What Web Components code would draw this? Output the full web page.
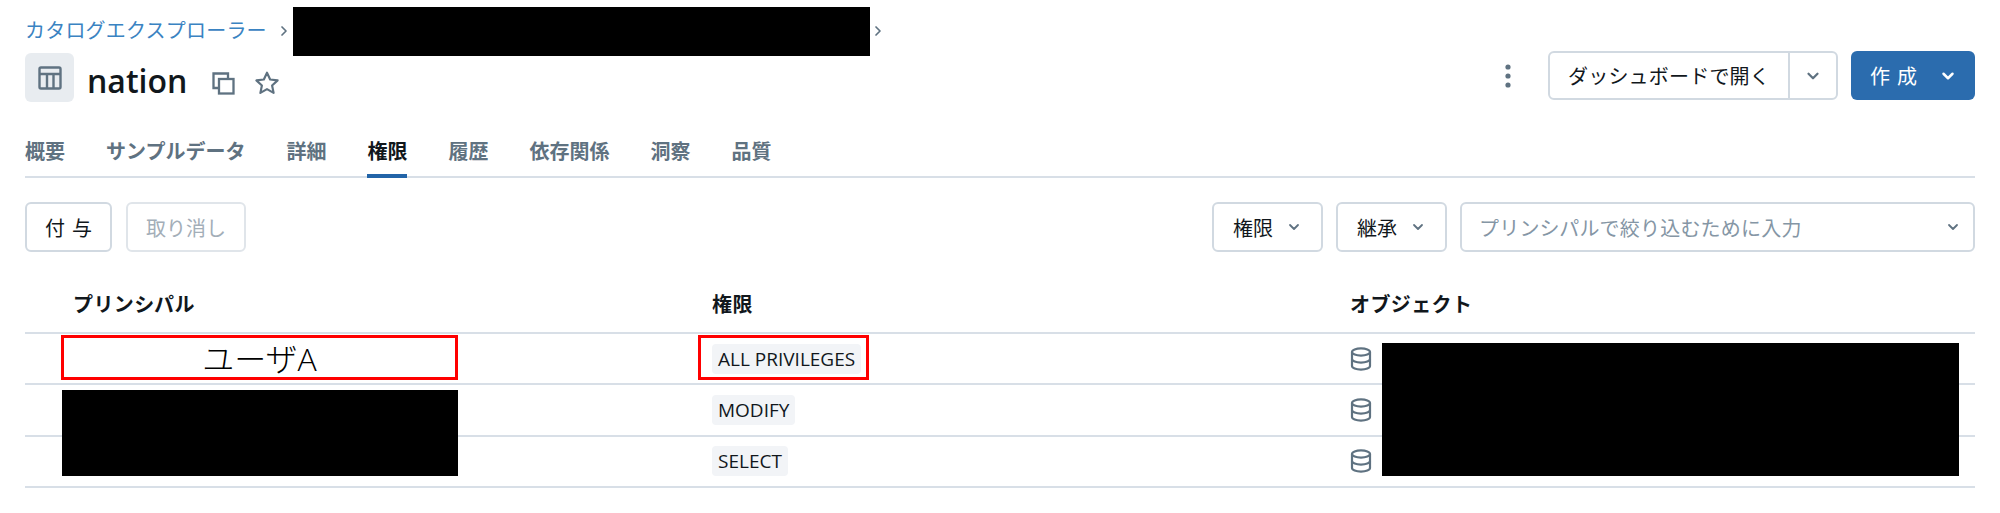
<!DOCTYPE html>
<html lang="ja">
<head>
<meta charset="utf-8">
<title>nation</title>
<style>
  html, body { margin: 0; background: #fff; }
  body {
    position: relative;
    height: 513px;
    overflow: hidden;
    font-family: "Open Sans", "Noto Sans CJK JP", sans-serif;
    font-size: 20px;
    color: #11171c;
  }
</style>
</head>
<body>
<explorer-page>
  <page-header name="nation"></page-header>
  <tab-strip active="権限" tabs="概要,サンプルデータ,詳細,権限,履歴,依存関係,洞察,品質"></tab-strip>
  <filter-bar></filter-bar>
  <grant-table>
    <grant-row privilege="ALL PRIVILEGES" marked>ユーザA</grant-row>
    <grant-row privilege="MODIFY"></grant-row>
    <grant-row privilege="SELECT"></grant-row>
  </grant-table>
</explorer-page>
<redact-box x="293" y="7" w="577" h="49"></redact-box>
<redact-box x="62" y="390" w="396" h="86"></redact-box>
<redact-box x="1382" y="343" w="577" h="133"></redact-box>

<script>
const chevron = (size = 16, width = 2) => `
  <svg width="${size}" height="${size}" viewBox="0 0 16 16" fill="none" stroke="currentColor"
    stroke-width="${width}" stroke-linecap="round" stroke-linejoin="round"><path d="M4 6l4 4 4-4"/></svg>`;

const chevronRight = `
  <svg width="16" height="16" viewBox="0 0 16 16" fill="none" stroke="currentColor"
    stroke-width="1.7" stroke-linecap="round" stroke-linejoin="round"><path d="M6 4l4 4-4 4"/></svg>`;

class ExplorerPage extends HTMLElement {
  constructor() {
    super();
    this.attachShadow({ mode: "open" });
    this.shadowRoot.innerHTML = `
      <style>
        :host { display: block; padding: 0 25px; }
      </style>
      <slot></slot>`;
  }
}

class RedactBox extends HTMLElement {
  constructor() {
    super();
    this.attachShadow({ mode: "open" });
  }

  connectedCallback() {
    const x = this.getAttribute("x");
    const y = this.getAttribute("y");
    const w = this.getAttribute("w");
    const h = this.getAttribute("h");
    this.shadowRoot.innerHTML = `
      <style>
        :host {
          display: block;
          position: absolute;
          left: ${x}px;
          top: ${y}px;
          width: ${w}px;
          height: ${h}px;
          background: #000;
        }
      </style>`;
  }
}

class PageHeader extends HTMLElement {
  constructor() {
    super();
    this.attachShadow({ mode: "open" });
  }

  connectedCallback() {
    const name = this.getAttribute("name") || "";
    this.shadowRoot.innerHTML = `
      <style>
        :host { display: block; padding-top: 17px; }
        .crumbs {
          display: flex;
          align-items: center;
          height: 28px;
          color: #3a83c2;
          line-height: 28px;
        }
        .crumbs b { font-weight: 400; letter-spacing: 0.2px; }
        .crumbs svg { color: #5f7281; display: block; }
        .crumbs .near { margin-left: 9px; }
        .crumbs .far { margin-left: 578px; }
        .row {
          display: flex;
          align-items: flex-start;
          justify-content: space-between;
          margin-top: 6px;
          height: 51px;
        }
        .title { display: flex; align-items: center; margin-top: 2px; }
        .badge {
          width: 49px;
          height: 49px;
          border-radius: 6px;
          background: #e8ecf0;
          display: flex;
          align-items: center;
          justify-content: center;
          color: #5f7281;
        }
        h1 {
          margin: 6px 0 0 13px;
          font-size: 32px;
          font-weight: 600;
          line-height: 40px;
        }
        .copy { margin: 10px 0 0 24px; color: #5f7281; display: block; }
        .star { margin: 10px 0 0 19px; color: #5f7281; display: block; }
        .actions { display: flex; align-items: center; }
        .kebab { color: #5f7281; margin-right: 37px; display: block; }
        .split {
          display: flex;
          height: 49px;
          box-sizing: border-box;
          border: 2px solid #d1d9e1;
          border-radius: 6px;
          background: #fff;
          margin-right: 13px;
        }
        .split span {
          display: flex;
          align-items: center;
          padding: 0 18px 0 18px;
          border-right: 2px solid #d1d9e1;
          color: #11171c;
          letter-spacing: 0.2px;
        }
        .split i {
          display: flex;
          align-items: center;
          justify-content: center;
          width: 46px;
          color: #5f7281;
        }
        .primary {
          display: flex;
          align-items: center;
          width: 124px;
          height: 49px;
          box-sizing: border-box;
          padding-left: 19px;
          border-radius: 6px;
          background: #2b6cae;
          color: #fff;
          letter-spacing: 7px;
        }
        .primary svg { margin-left: 15px; }
      </style>
      <div class="crumbs">
        <b>カタログエクスプローラー</b>
        <span class="near">${chevronRight}</span>
        <span class="far">${chevronRight}</span>
      </div>
      <div class="row">
        <div class="title">
          <div class="badge">
            <svg width="24" height="24" viewBox="0 0 24 24" fill="none" stroke="currentColor" stroke-width="2.4">
              <rect x="1.5" y="1.5" width="21" height="21" rx="1.5"/>
              <path d="M1.5 8h21M9 8v14.5M15.5 8v14.5"/>
            </svg>
          </div>
          <h1>${name}</h1>
          <svg class="copy" width="24" height="24" viewBox="0 0 24 24" fill="none" stroke="currentColor" stroke-width="2.3">
            <path d="M7 17H2.5V2.5H17V7"/>
            <rect x="8" y="8" width="14.5" height="14.5"/>
          </svg>
          <svg class="star" width="26" height="26" viewBox="0 0 24 24" fill="none" stroke="currentColor" stroke-width="2" stroke-linejoin="round">
            <path d="M12 2.5l2.9 6.3 6.9.8-5.1 4.7 1.4 6.8-6.1-3.4-6.1 3.4 1.4-6.8-5.1-4.7 6.9-.8z"/>
          </svg>
        </div>
        <div class="actions">
          <svg class="kebab" width="6" height="24" viewBox="0 0 6 24" fill="currentColor">
            <circle cx="3" cy="3" r="2.6"/><circle cx="3" cy="12" r="2.6"/><circle cx="3" cy="21" r="2.6"/>
          </svg>
          <div class="split"><span>ダッシュボードで開く</span><i>${chevron(18, 2)}</i></div>
          <div class="primary">作成${chevron(18, 2.2)}</div>
        </div>
      </div>`;
  }
}

class TabStrip extends HTMLElement {
  constructor() {
    super();
    this.attachShadow({ mode: "open" });
  }

  connectedCallback() {
    const active = this.getAttribute("active");
    const tabs = this.getAttribute("tabs").split(",");
    this.shadowRoot.innerHTML = `
      <style>
        :host {
          display: flex;
          gap: 41px;
          margin-top: 31px;
          height: 43px;
          box-sizing: content-box;
          border-bottom: 2px solid #d8dfe7;
        }
        div {
          height: 45px;
          box-sizing: border-box;
          line-height: 38px;
          font-weight: 600;
          color: #5f7281;
        }
        .on {
          color: #11171c;
          font-weight: 700;
          border-bottom: 4px solid #2264a8;
        }
      </style>
      ${tabs.map((t) => `<div class="${t === active ? "on" : ""}">${t}</div>`).join("")}`;
  }
}

class FilterBar extends HTMLElement {
  constructor() {
    super();
    this.attachShadow({ mode: "open" });
    this.shadowRoot.innerHTML = `
      <style>
        :host {
          display: flex;
          align-items: center;
          justify-content: space-between;
          margin-top: 24px;
        }
        .side { display: flex; gap: 14px; }
        .right { gap: 13px; }
        .btn {
          display: flex;
          align-items: center;
          justify-content: center;
          height: 50px;
          box-sizing: border-box;
          border: 2px solid #d1d9e1;
          border-radius: 6px;
          background: #fff;
          color: #11171c;
        }
        .grant { width: 87px; letter-spacing: 7px; padding-left: 7px; }
        .revoke { width: 120px; color: #a3aeb8; border-color: #e0e5ea; }
        .drop { width: 111px; gap: 13px; }
        .drop svg { color: #5f7281; }
        .search {
          width: 515px;
          justify-content: space-between;
          padding: 0 12px 0 17px;
          color: #8596a5;
          letter-spacing: 0.2px;
        }
        .search svg { color: #5f7281; }
      </style>
      <div class="side">
        <div class="btn grant">付与</div>
        <div class="btn revoke">取り消し</div>
      </div>
      <div class="side right">
        <div class="btn drop">権限${chevron(16, 1.8)}</div>
        <div class="btn drop">継承${chevron(16, 1.8)}</div>
        <div class="btn search">プリンシパルで絞り込むために入力${chevron(16, 1.8)}</div>
      </div>`;
  }
}

class GrantTable extends HTMLElement {
  constructor() {
    super();
    this.attachShadow({ mode: "open" });
    this.shadowRoot.innerHTML = `
      <style>
        :host { display: block; margin-top: 29px; }
        .head {
          display: grid;
          grid-template-columns: 639px 638px 1fr;
          padding-left: 48px;
          height: 51px;
          line-height: 48px;
          font-weight: 700;
          letter-spacing: 0.4px;
          border-bottom: 2px solid #d8dfe7;
          box-sizing: content-box;
        }
      </style>
      <div class="head"><div>プリンシパル</div><div>権限</div><div>オブジェクト</div></div>
      <slot></slot>`;
  }
}

class GrantRow extends HTMLElement {
  constructor() {
    super();
    this.attachShadow({ mode: "open" });
  }

  connectedCallback() {
    const privilege = this.getAttribute("privilege");
    const marked = this.hasAttribute("marked");
    this.shadowRoot.innerHTML = `
      <style>
        :host {
          display: grid;
          grid-template-columns: 639px 638px 1fr;
          align-items: center;
          padding-left: 48px;
          height: 49.4px;
          border-bottom: 2px solid #d8dfe7;
        }
        .cell { position: relative; display: flex; align-items: center; }
        .tag {
          font-size: 19px;
          line-height: 30px;
          padding: 0 6px;
          border-radius: 4px;
          background: #f2f4f7;
          color: #11171c;
        }
        .mark {
          position: absolute;
          box-sizing: border-box;
          border: 3px solid #f00;
          top: 50%;
          margin-top: -24px;
          height: 45px;
        }
        .user {
          left: -12px;
          width: 397px;
          display: flex;
          align-items: center;
          justify-content: center;
          font-size: 32px;
          font-weight: 300;
          color: #000;
        }
        .priv { left: -14px; width: 171px; }
        svg { color: #5f7281; display: block; }
      </style>
      <div class="cell">${marked ? `<div class="mark user"><slot></slot></div>` : ""}</div>
      <div class="cell">
        <span class="tag">${privilege}</span>
        ${marked ? `<div class="mark priv"></div>` : ""}
      </div>
      <div class="cell">
        <svg width="22" height="24" viewBox="0 0 22 24" fill="none" stroke="currentColor" stroke-width="2.2">
          <ellipse cx="11" cy="5" rx="9" ry="3.6"/>
          <path d="M2 5v14c0 2 4 3.6 9 3.6s9-1.6 9-3.6V5"/>
          <path d="M2 12c0 2 4 3.6 9 3.6s9-1.6 9-3.6"/>
        </svg>
      </div>`;
  }
}

customElements.define("explorer-page", ExplorerPage);
customElements.define("redact-box", RedactBox);
customElements.define("page-header", PageHeader);
customElements.define("tab-strip", TabStrip);
customElements.define("filter-bar", FilterBar);
customElements.define("grant-table", GrantTable);
customElements.define("grant-row", GrantRow);
</script>
</body>
</html>
